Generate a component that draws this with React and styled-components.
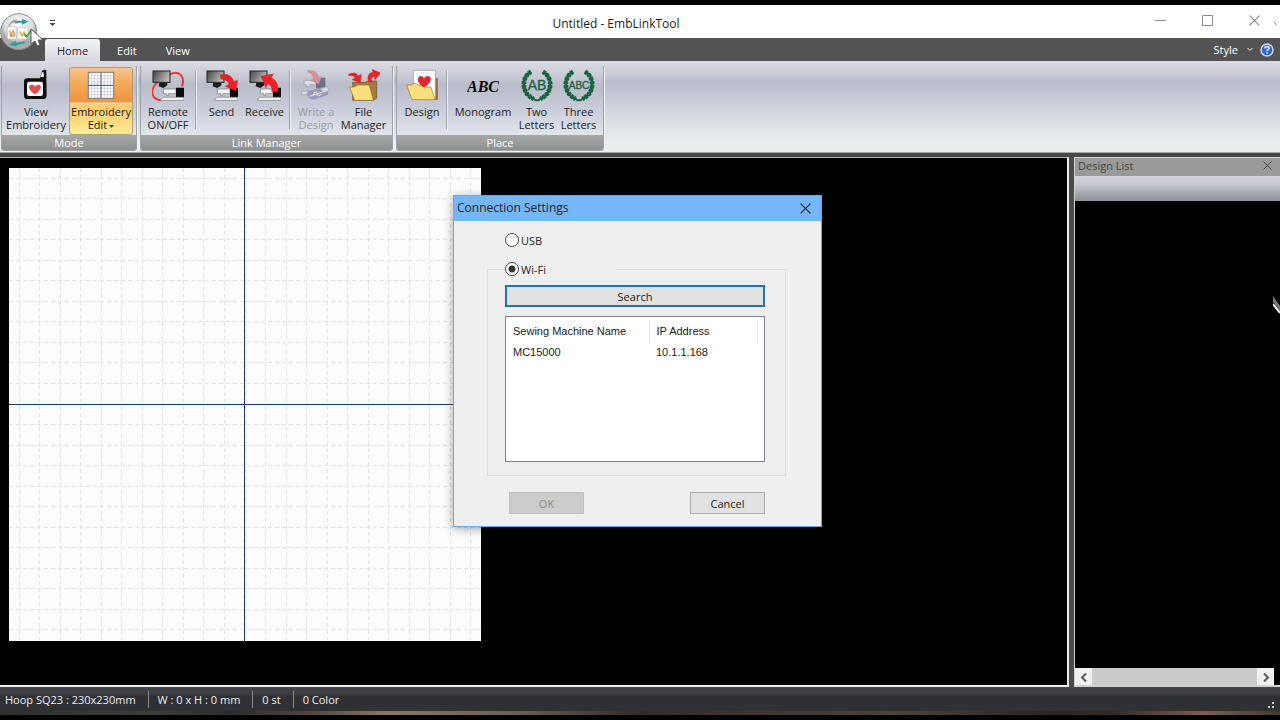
import React from 'react'
import styled, { createGlobalStyle, css } from 'styled-components'

const GlobalStyle = createGlobalStyle`
  * { box-sizing: border-box; }
  body {
    margin: 0;
    background: #000;
    color: #222;
    font-family: "Open Sans", "Noto Sans", sans-serif;
    font-size: 11px;
    overflow: hidden;
  }
  button, input { font: inherit; color: inherit; margin: 0; }
  svg { display: block; }
`
const Window = styled.div`
  min-height: 100vh;
  padding: 5px 0;
  display: flex;
  flex-direction: column;
  background: #000;
  position: relative;
`

/* title bar */
const TitleBar = styled.header`
  height: 33px;
  background: #fff;
  display: grid;
  grid-template-columns: 1fr auto 1fr;
  align-items: center;
  h1 {
    margin: 0;
    padding: 3px 48px 0 0;
    font-size: 12px;
    font-weight: 400;
    color: #222;
  }
`
const QuickMenu = styled.button`
  border: 0;
  padding: 4px 0 0;
  margin-left: 48px;
  width: 9px;
  background: none;
`
const WindowButtons = styled.div`
  display: flex;
  justify-content: flex-end;
  gap: 24px;
  padding: 0 14px 3px 0;
`
const WindowButton = styled.button`
  border: 0;
  padding: 0;
  width: 23px;
  height: 20px;
  display: flex;
  align-items: center;
  justify-content: center;
  background: none;
  color: #8c8c8c;
`

/* tabs */
const TabBar = styled.nav`
  height: 23px;
  background: #535353;
  display: flex;
  align-items: flex-end;
  gap: 5px;
  padding-left: 45px;
  color: #fff;
`
const Tab = styled.button`
  border: 0;
  height: 22px;
  padding: 1px 12px 0;
  background: none;
  ${({ $active }) => $active && css`
    color: #222;
    background: linear-gradient(#f2f3f7, #d9d9e1);
    border-radius: 3px 3px 0 0;
  `}
`
const TabTools = styled.div`
  margin-left: auto;
  height: 22px;
  display: flex;
  align-items: center;
  gap: 7px;
  padding: 0 6px 1px 0;
`
const StyleMenu = styled.button`
  border: 0;
  padding: 0;
  background: none;
  display: flex;
  align-items: center;
  gap: 9px;
`
const HelpButton = styled.button`
  border: 0;
  padding: 0;
  background: none;
`
const AppButton = styled.button`
  position: absolute;
  left: 0;
  top: 12px;
  border: 0;
  padding: 0;
  background: none;
`

/* ribbon */
const Ribbon = styled.section`
  height: 92px;
  padding: 4px 1px 1px;
  display: flex;
  gap: 3px;
  background: linear-gradient(#dcdae2 0, #c9c9d5 14px, #b9bbc9 20px, #c7ccd8 38px, #d9dde2 58px, #e9efed 84px, #e9efed);
  border-bottom: 1px solid #a5a7a6;
`
const Group = styled.div`
  display: flex;
  flex-direction: column;
  border: 1px solid #9fa1a8;
  border-top-color: #d8d8e0;
  border-radius: 3px;
  box-shadow: 1px 1px 0 #f2f3f5;
  background: linear-gradient(#d6d6df 0, #b9bcc9 20px, #c8ccd8 42px, #e3e6ec 70px);
  overflow: hidden;
`
const GroupTools = styled.div`
  flex: 1;
  display: flex;
  align-items: stretch;
  padding: 1px 3px 0 ${({ $start }) => $start}px;
`
const GroupName = styled.div`
  height: 15px;
  line-height: 15px;
  text-align: center;
  color: #fff;
  background: linear-gradient(#a5a7a8, #8f9191);
`
const Divider = styled.i`
  width: 2px;
  margin: 4px ${({ $space }) => $space}px 6px;
  border-left: 1px solid #9fa3ae;
  border-right: 1px solid #eceef3;
`
const Tool = styled.button`
  width: ${({ $width }) => $width}px;
  border: 1px solid transparent;
  border-radius: 3px;
  padding: 1px 0 0;
  display: flex;
  flex-direction: column;
  align-items: center;
  gap: 2px;
  background: none;
  line-height: 13px;
  color: #222;
  span { white-space: nowrap; }
  &:disabled { color: #9a9ca4; }
  ${({ $on }) => $on && css`
    border-color: #b09a78;
    background: linear-gradient(#f6c48c 0, #f3ab5e 14px, #ee9440 34px, #fbe3b0 35px, #f7cc70 37px, #fbd97a 52px, #fdec9a);
  `}
`
const Caret = styled.svg`
  display: inline-block;
  vertical-align: middle;
`

/* work area */
const Frame = styled.main`
  flex: 1;
  display: flex;
  border-top: 4px solid #484848;
  background: #4b4b4b;
`
const Canvas = styled.section`
  flex: 1;
  min-width: 0;
  background: #000;
  border: 2px solid #b4b4b4;
  border-width: 1px 2px 2px 0;
  border-right-color: #ececec;
  border-bottom-color: #ececec;
  padding: 10px 9px;
`
const SidePanel = styled.aside`
  width: 206px;
  margin-left: 5px;
  display: flex;
  flex-direction: column;
  background: #000;
  border: 1px solid #d2d2d2;
  border-width: 1px 0 2px 1px;
`
const PanelTitle = styled.header`
  height: 18px;
  padding: 0 8px 3px 3px;
  display: flex;
  align-items: center;
  justify-content: space-between;
  background: #999b9a;
  color: #444;
  h2 { margin: 0; font-size: 11px; font-weight: 400; }
  button { border: 0; padding: 0; background: none; }
`
const PanelTools = styled.div`
  height: 25px;
  background: linear-gradient(#d3d4da, #c5c7d0 9px, #a3a5ad 18px, #8f9198);
`
const ScrollBar = styled.div`
  margin: auto 6px 0 0;
  height: 17px;
  display: flex;
  background: #f0f0f0;
  button {
    width: 17px;
    border: 0;
    padding: 2px 0 0;
    display: flex;
    align-items: center;
    justify-content: center;
    background: none;
  }
`
const Thumb = styled.div`
  flex: 1;
  background: #cacccb;
`

/* status bar */
const StatusBar = styled.footer`
  height: 24px;
  display: flex;
  align-items: center;
  background: linear-gradient(#45464a, #393a3e 8px, #2f3034 9px, #303134);
  color: #eee;
`
const StatusItem = styled.span`
  padding: 0 12px 0 ${({ $first }) => ($first ? 5 : 9)}px;
  line-height: 17px;
  border-right: 1px solid #8a8a8c;
  &:last-of-type { border-right: 0; }
`
const Grip = styled.svg`
  margin: auto 5px 1px auto;
`
const Backdrop = styled.div`
  height: 4px;
  background: linear-gradient(90deg, #2e302c, #3c3d39 12%, #2c2c2a 18%, #51453b 24%, #8a7660 30%, #6d6250 40%, #322c28 50%, #4f4236 70%, #292522 82%, #342a24 87%, #7c5f4b 94%, #443830);
`

/* dialog */
const Dialog = styled.section`
  position: absolute;
  left: 453px;
  top: 195px;
  width: 369px;
  border: 1px solid #6ea8e0;
  background: #f0eff0;
  box-shadow: 0 2px 10px rgba(0, 0, 0, .35);
`
const DialogTitle = styled.header`
  height: 25px;
  padding: 0 10px 0 3px;
  display: flex;
  align-items: center;
  justify-content: space-between;
  background: #75b6fb;
  h2 { margin: 0; padding-bottom: 2px; font-size: 12px; font-weight: 400; }
  button { border: 0; padding: 0; background: none; }
`
const DialogBody = styled.form`
  padding: 11px 35px 12px 33px;
`
const Choice = styled.label`
  display: flex;
  align-items: center;
  gap: 2px;
  height: 16px;
  input {
    appearance: none;
    width: 14px;
    height: 14px;
    border: 1px solid #444;
    border-radius: 50%;
    background: #fff;
  }
  input:checked { background: radial-gradient(#333 3px, #fff 4px); }
`
const UsbRow = styled.div`
  padding-left: 18px;
`
const WifiGroup = styled.fieldset`
  margin: 13px 0 0;
  padding: 8px 20px 13px 17px;
  border: 1px solid #dcdcdc;
  min-width: 0;
  legend {
    padding: 0;
    width: 111px;
  }
`
const PushButton = styled.button`
  width: 75px;
  height: 22px;
  padding: 0;
  border: 1px solid #adadad;
  background: #e1e1e1;
  &:disabled {
    background: #ccc;
    border-color: #bfbfbf;
    color: #8a8a8a;
  }
`
const SearchButton = styled(PushButton)`
  display: block;
  width: 100%;
  border: 2px solid #1f74bd;
`
const ListBox = styled.div`
  height: 146px;
  margin-top: 9px;
  padding-top: 3px;
  border: 1px solid #7f8288;
  background: #fff;
  font-family: "Liberation Sans", Arial, sans-serif;
  table { width: 252px; border-collapse: collapse; table-layout: fixed; }
  th, td {
    padding: 0 0 0 7px;
    text-align: left;
    font-weight: 400;
    white-space: nowrap;
  }
  th { height: 24px; padding-bottom: 3px; border-right: 1px solid #e5e5e5; }
  th:first-child { width: 143px; }
  td { height: 16px; }
`
const DialogButtons = styled.div`
  display: flex;
  justify-content: space-between;
  padding: 16px 21px 0 22px;
`
const Pointer = styled.svg`
  position: absolute;
  left: 30px;
  top: 28px;
  pointer-events: none;
`
const EdgeMark = styled.svg`
  position: absolute;
  right: 0;
  top: ${({ $top }) => $top}px;
  pointer-events: none;
`

const Icon = ({ children }) => (
  <svg width="32" height="34" viewBox="0 0 96 102" aria-hidden="true">{children}</svg>
)

const Monitor = () => (
  <g>
    <defs>
      <linearGradient id="screen" x2="1" y2=".4">
        <stop offset="0" stopColor="#444" />
        <stop offset="1" stopColor="#b9b9b9" />
      </linearGradient>
    </defs>
    <rect x="3" y="6" width="51" height="34" fill="url(#screen)" stroke="#222" strokeWidth="3" />
    <path d="M22 41h24v8l-12 8-14-5z" fill="#1c1c1c" />
  </g>
)

const Machine = () => (
  <g>
    <path d="M34 60h38v14H50v5h-6v-5H34z" fill="#f4f4f4" stroke="#777" strokeWidth="2" />
    <path d="M72 56h24v30H72z" fill="#0c0c0c" />
    <path d="M26 90l8-5h62v9H26z" fill="#f7f7f7" stroke="#777" strokeWidth="2" />
  </g>
)

const Folder = () => (
  <g strokeLinejoin="round">
    <path d="M14 40h40l4-4h28v52l-10 6H14z" fill="#a97742" stroke="#6b4a22" strokeWidth="2" />
    <path d="M5 54h16l5-6h38l12 46H20z" fill="#fbdf7c" stroke="#a0731f" strokeWidth="2" />
  </g>
)

const Wreath = () => (
  <g fill="none" stroke="#1b6340">
    <path d="M30 8C0 26 0 72 38 90M66 8c30 18 30 64-8 82" strokeWidth="8" />
    <path d="M30 8C0 26 0 72 38 90M66 8c30 18 30 64-8 82" strokeWidth="14" strokeDasharray="9 3" />
    <path d="M32 86l12 8 8 0 12-8" strokeWidth="6" />
  </g>
)

const ViewIcon = () => (
  <Icon>
    <path d="M22 28h38l6-22 5-3v-1l8 1v26l1 50q0 11-10 11H22q-10 0-10-10V38q0-10 10-10z" fill="#0d0d0d" />
    <path d="M62 24l4-14h5v14z" fill="#fff" />
    <rect x="21" y="38" width="48" height="43" rx="7" fill="#fff" />
    <path d="M45 76C20 59 26 47 36 47q6 0 9 6 3-6 9-6c11 0 15 13-9 29z" fill="#e34b4d" />
  </Icon>
)

const GridIcon = () => (
  <Icon>
    <rect x="10" y="10" width="76" height="78" fill="#fff" stroke="#777" strokeWidth="3" />
    <path d="M20 11v76M29 11v76M38 11v76M58 11v76M67 11v76M76 11v76M11 20h74M11 29h74M11 39h74M11 58h74M11 68h74M11 77h74" stroke="#c6c6d2" strokeWidth="2" />
    <path d="M48 11v76M11 49h74" stroke="#4347b4" strokeWidth="3" />
  </Icon>
)

const RemoteIcon = () => (
  <Icon>
    <path d="M52 17C82 0 100 24 90 52M18 38C-8 60-4 92 28 94" fill="none" stroke="#e93a36" strokeWidth="6" />
    <Monitor />
    <Machine />
  </Icon>
)

const SendIcon = () => (
  <Icon>
    <Monitor />
    <Machine />
    <path d="M42 18c20-6 37 2 41 20l11-5-4 33-32-14 11-6c-3-10-12-15-24-15z" fill="#ee2227" stroke="#b7181c" strokeWidth="1" />
  </Icon>
)

const ReceiveIcon = () => (
  <Icon>
    <Monitor />
    <Machine />
    <path d="M36 22l37-8-6 12c15 7 23 23 20 42H68c2-12-2-20-13-24l-4 13z" fill="#ee2227" stroke="#b7181c" strokeWidth="1" />
  </Icon>
)

const WriteIcon = () => (
  <Icon>
    <g opacity=".7">
      <path d="M12 34h36v13H30v6H18v-6h-6zM4 66h50v10H4z" fill="#e8e8ee" stroke="#8c8e9a" strokeWidth="2" />
      <path d="M48 26h28v32H48z" fill="#4d5163" />
      <path d="M22 4c20-3 32 6 34 20l10-3-10 24-28-11 12-5C38 18 32 12 22 10z" fill="#d97a85" />
      <path d="M22 68l42-13q22 2 20 22L40 92q-22-2-18-24z" fill="#8588bd" />
      <path d="M60 60l21-8 8 12-16 7z" fill="#dfe0ea" stroke="#9294a4" strokeWidth="2" />
      <path d="M29 82l42-14M40 78l4-9h8M48 76l9 4 7-4" fill="none" stroke="#fff" strokeWidth="3" />
    </g>
  </Icon>
)

const FileIcon = () => (
  <Icon>
    <Folder />
    <path d="M2 16c14-8 26-4 28 5l10-5-3 25-25-9 9-5c-3-6-9-8-19-7zM62 38c-6-14 0-27 13-28l-3-9 26 11-17 20-3-10c-8 2-9 9-6 17z" fill="#ee2227" stroke="#b7181c" strokeWidth="1" />
  </Icon>
)

const DesignIcon = () => (
  <Icon>
    <path d="M76 28h20v64H76z" fill="#9b7243" />
    <path d="M22 4h66v84H22z" fill="#fdfdfd" stroke="#8f8f8f" strokeWidth="2" />
    <path d="M54 56C30 40 34 22 44 22q7 0 10 7 4-7 11-7c13 0 14 18-11 34z" fill="#e3262d" stroke="#a3161b" strokeWidth="1" />
    <path d="M2 48h16l5-6 30 12h21l14 38H18z" fill="#fbdf7c" stroke="#a0731f" strokeWidth="2" strokeLinejoin="round" />
  </Icon>
)

const MonogramIcon = () => (
  <Icon>
    <text x="48" y="69" textAnchor="middle" fontFamily="Liberation Serif, serif" fontSize="48" fontStyle="italic" fontWeight="700" fill="#0a0a0a">ABC</text>
  </Icon>
)

const WreathIcon = ({ letters, size, baseline }) => (
  <Icon>
    <Wreath />
    <text x="48" y={baseline} textAnchor="middle" fontFamily="Liberation Sans, sans-serif" fontSize={size} fill="#1b6340" stroke="#1b6340">{letters}</text>
  </Icon>
)

const Cross = ({ size = 9, color = '#333' }) => (
  <svg width={size} height={size} viewBox="0 0 9 9" fill="none" stroke={color}>
    <path d="M.5.5l8 8M8.500.5l-8 8" />
  </svg>
)

const Chevron = ({ d }) => (
  <svg width="8" height="9" viewBox="0 0 8 9" fill="none" stroke="#555" strokeWidth="2"><path d={d} /></svg>
)

const groups = [
  {
    name: 'Mode',
    start: 1,
    tools: [
      { label: ['View', 'Embroidery'], width: 66, icon: <ViewIcon /> },
      { label: ['Embroidery', 'Edit'], width: 64, icon: <GridIcon />, on: true },
    ],
  },
  {
    name: 'Link Manager',
    start: 3,
    tools: [
      { label: ['Remote', 'ON/OFF'], width: 48, icon: <RemoteIcon /> },
      { divider: 3 },
      { label: ['Send'], width: 43, icon: <SendIcon /> },
      { label: ['Receive'], width: 43, icon: <ReceiveIcon /> },
      { divider: 3 },
      { label: ['Write a', 'Design'], width: 44, icon: <WriteIcon />, disabled: true },
      { label: ['File', 'Manager'], width: 51, icon: <FileIcon /> },
    ],
  },
  {
    name: 'Place',
    start: 3,
    tools: [
      { label: ['Design'], width: 44, icon: <DesignIcon /> },
      { divider: 2 },
      { label: ['Monogram'], width: 66, icon: <MonogramIcon /> },
      { label: ['Two', 'Letters'], width: 41, icon: <WreathIcon letters="AB" size={42} baseline={63} /> },
      { label: ['Three', 'Letters'], width: 43, icon: <WreathIcon letters="ABC" size={30} baseline={59} /> },
    ],
  },
]

const PAGE = 472
const CELL = PAGE / 23
const offsets = Array.from({ length: 23 }, (_, i) => Math.floor((i + 0.5) * CELL) + 0.5)

const Hoop = () => (
  <svg width={PAGE} height={PAGE + 1} role="img" aria-label="Hoop">
    <rect width="100%" height="100%" fill="#fdfdfe" />
    <g stroke="#e2e2e4" strokeDasharray="4 3">
      {offsets.map((o) => (
        <React.Fragment key={o}>
          <line x1={o} y1="0" x2={o} y2={PAGE} />
          <line x1="0" y1={o} x2={PAGE} y2={o} />
        </React.Fragment>
      ))}
    </g>
    <path d="M235.500 0V473M0 236.500H473" stroke="#1d3a6e" />
  </svg>
)

const App = () => {
  return (
    <>
      <GlobalStyle />
      <Window>
        <TitleBar>
          <QuickMenu aria-label="Customize toolbar">
            <svg width="9" height="9" viewBox="0 0 9 9"><path d="M2 1.500h5" stroke="#444" /><path d="M1.500 4h6l-3 3z" fill="#444" /></svg>
          </QuickMenu>
          <h1>Untitled - EmbLinkTool</h1>
          <WindowButtons>
            <WindowButton aria-label="Minimize">
              <svg width="11" height="11" stroke="currentColor"><path d="M0 5.500h11" /></svg>
            </WindowButton>
            <WindowButton aria-label="Maximize">
              <svg width="11" height="11" fill="none" stroke="currentColor"><path d="M.5.5h10v10H.5z" /></svg>
            </WindowButton>
            <WindowButton aria-label="Close"><Cross size={11} color="#8c8c8c" /></WindowButton>
          </WindowButtons>
        </TitleBar>
        <TabBar>
          <Tab $active>Home</Tab>
          <Tab>Edit</Tab>
          <Tab>View</Tab>
          <TabTools>
            <StyleMenu>
              Style
              <svg width="6" height="5" viewBox="0 0 6 5" fill="none" stroke="#fff"><path d="M.5 1L3 3.500 5.500 1" /></svg>
            </StyleMenu>
            <HelpButton aria-label="Help">
              <svg width="14" height="14" viewBox="0 0 14 14">
                <circle cx="7" cy="7" r="6" fill="#2c62d6" stroke="#c9dcfa" strokeWidth="1.500" />
                <path d="M5 5.500q0-2 2-2t2 1.700q0 1-1.200 1.600Q7 7.300 7 8.200M7 9.500v1.300" fill="none" stroke="#fff" strokeWidth="1.500" />
              </svg>
            </HelpButton>
          </TabTools>
        </TabBar>
        <Ribbon>
          {groups.map((group) => (
            <Group key={group.name}>
              <GroupTools $start={group.start}>
                {group.tools.map((tool, i) => tool.divider ? (
                  <Divider key={i} $space={tool.divider} />
                ) : (
                  <Tool key={i} $width={tool.width} $on={tool.on} disabled={tool.disabled}>
                    {tool.icon}
                    <span>
                      {tool.label[0]}
                      {tool.label[1] && <><br />{tool.label[1]}</>}
                      {tool.on && <Caret width="7" height="5" viewBox="0 0 7 5"><path d="M2 1h5L4.500 4z" fill="#444" /></Caret>}
                    </span>
                  </Tool>
                ))}
              </GroupTools>
              <GroupName>{group.name}</GroupName>
            </Group>
          ))}
        </Ribbon>
        <Frame>
          <Canvas><Hoop /></Canvas>
          <SidePanel>
            <PanelTitle>
              <h2>Design List</h2>
              <button aria-label="Close panel"><Cross color="#444" /></button>
            </PanelTitle>
            <PanelTools />
            <ScrollBar>
              <button aria-label="Scroll left"><Chevron d="M6 .5l-4 4 4 4" /></button>
              <Thumb />
              <button aria-label="Scroll right"><Chevron d="M2 .5l4 4-4 4" /></button>
            </ScrollBar>
          </SidePanel>
        </Frame>
        <StatusBar>
          <StatusItem $first>Hoop SQ23 : 230x230mm</StatusItem>
          <StatusItem>W : 0 x H : 0 mm</StatusItem>
          <StatusItem>0 st</StatusItem>
          <StatusItem>0 Color</StatusItem>
          <Grip width="8" height="8" viewBox="0 0 8 8"><path d="M5 0h2v2H5zM5 4h2v2H5zM1 4h2v2H1z" fill="#ccc" /></Grip>
        </StatusBar>
        <Backdrop />

        <AppButton aria-label="Application menu">
          <svg width="38" height="40" viewBox="0 0 114 120">
            <defs>
              <radialGradient id="orb" cy=".3">
                <stop offset="0" stopColor="#fff" />
                <stop offset=".8" stopColor="#d9dcdc" />
                <stop offset="1" stopColor="#a9acae" />
              </radialGradient>
            </defs>
            <circle cx="56" cy="59" r="54" fill="url(#orb)" stroke="#8b8d8f" strokeWidth="3" />
            <path d="M26 44l8-14 14-6v12M34 30h26" fill="none" stroke="#999" strokeWidth="4" />
            <path d="M52 26h14v-6l20 9-20 9v-6H48z" fill="#2ba39a" />
            <rect x="22" y="44" width="27" height="37" rx="3" fill="#fff" stroke="#b8b8b8" strokeWidth="2" />
            <rect x="52" y="46" width="32" height="35" rx="3" fill="#fff" stroke="#b8b8b8" strokeWidth="2" />
            <path d="M28 56l4 14 8-14 4 16M30 72h14" fill="none" stroke="#e9903a" strokeWidth="4" />
            <path d="M58 58l8 14 6-12 6 12" fill="none" stroke="#e9b23a" strokeWidth="4" />
            <path d="M72 66l8 8 16-22" fill="none" stroke="#4da447" strokeWidth="6" />
            <path d="M76 88l-28 4v-6l-22 12 24 6v-5l24-5z" fill="#2ba39a" />
          </svg>
        </AppButton>
        <Dialog role="dialog" aria-labelledby="connection-title">
          <DialogTitle>
            <h2 id="connection-title">Connection Settings</h2>
            <button aria-label="Close dialog"><Cross size={11} color="#222" /></button>
          </DialogTitle>
          <DialogBody onSubmit={(e) => e.preventDefault()}>
            <UsbRow>
              <Choice><input type="radio" name="connection" value="usb" />USB</Choice>
            </UsbRow>
            <WifiGroup>
              <legend>
                <Choice><input type="radio" name="connection" value="wifi" defaultChecked />Wi-Fi</Choice>
              </legend>
              <SearchButton type="button">Search</SearchButton>
              <ListBox>
                <table>
                  <thead>
                    <tr><th>Sewing Machine Name</th><th>IP Address</th></tr>
                  </thead>
                  <tbody>
                    <tr><td>MC15000</td><td>10.1.1.168</td></tr>
                  </tbody>
                </table>
              </ListBox>
            </WifiGroup>
            <DialogButtons>
              <PushButton type="button" disabled>OK</PushButton>
              <PushButton type="button">Cancel</PushButton>
            </DialogButtons>
          </DialogBody>
        </Dialog>
        <Pointer width="14" height="20" viewBox="0 0 14 20">
          <path d="M1 1v15l4-3 2 5 3-1-2-5h5z" fill="#fff" stroke="#555" />
        </Pointer>
        <EdgeMark $top={295} width="7" height="20" viewBox="0 0 7 20">
          <path d="M0 1l7 10v5L0 7z" fill="#777" />
          <path d="M0 9l7 9" stroke="#fff" strokeWidth="2" />
        </EdgeMark>
        <EdgeMark $top={22} width="6" height="4" viewBox="0 0 6 4">
          <path d="M0 0l3 3" stroke="#999" />
        </EdgeMark>
      </Window>
    </>
  )
}

export default App
